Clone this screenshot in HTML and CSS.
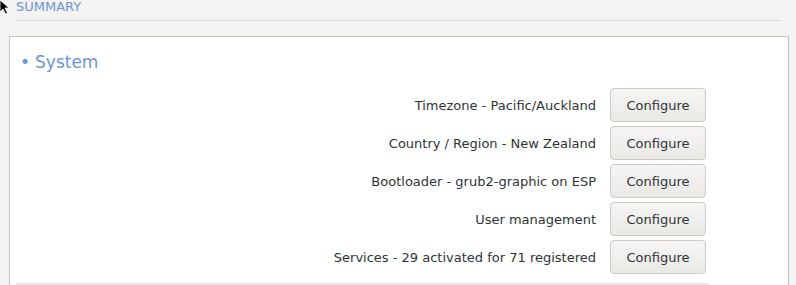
FILE: index.html
```html
<!DOCTYPE html>
<html lang="en">
<head>
  <meta charset="UTF-8">
  <meta name="viewport" content="width=device-width, initial-scale=1.0">
  <title>Summary</title>
  <link rel="stylesheet" href="styles.css">
</head>
<body>
  <svg class="cursor" width="12" height="16" viewBox="0 0 12 16">
    <path d="M0 0 L0 12 L3 9 L5.5 14 L7.5 13 L5 8 L9 8 Z" fill="#000" stroke="#fff" stroke-width="0.8"/>
  </svg>
  <div class="page">
    <div class="page-title">SUMMARY</div>
    <div class="summary-box">
      <h2 class="section-title"><span class="bullet">&bull;</span>System</h2>
      <div class="rows">
        <div class="row">
          <span class="row-label">Timezone - Pacific/Auckland</span>
          <button class="btn">Configure</button>
        </div>
        <div class="row">
          <span class="row-label">Country / Region - New Zealand</span>
          <button class="btn">Configure</button>
        </div>
        <div class="row">
          <span class="row-label">Bootloader - grub2-graphic on ESP</span>
          <button class="btn">Configure</button>
        </div>
        <div class="row">
          <span class="row-label">User management</span>
          <button class="btn">Configure</button>
        </div>
        <div class="row">
          <span class="row-label">Services - 29 activated for 71 registered</span>
          <button class="btn">Configure</button>
        </div>
      </div>
      <div class="next-section"></div>
    </div>
  </div>
</body>
</html>
```

FILE: styles.css
```css
body {
  font-family: "DejaVu Sans", Verdana, sans-serif;
  background-color: #f4f3f1;
  color: #2e3436;
  margin: 0;
  padding: 0;
  overflow: hidden;
}

.cursor {
  position: absolute;
  top: 0;
  left: 0;
}

.page {
  padding: 0 0 0 9px;
}

.page-title {
  margin-left: 7px;
  width: 766px;
  height: 20px;
  line-height: 14px;
  font-size: 13px;
  color: #6b95d9;
  border-bottom: 1px solid #dcdad6;
}

.summary-box {
  margin-top: 15px;
  width: 778px;
  height: 260px;
  background-color: #fff;
  border: 1px solid #c5c2bc;
  border-bottom: none;
}

.section-title {
  margin: 13px 0 0 10px;
  height: 24px;
  line-height: 24px;
  font-size: 17px;
  font-weight: normal;
  color: #6b95d9;
}

.bullet {
  margin-right: 5px;
}

.rows {
  margin-top: 14px;
  width: 696px;
  display: flex;
  flex-direction: column;
  gap: 4px;
}

.row {
  display: flex;
  justify-content: flex-end;
  align-items: center;
  gap: 14px;
}

.row-label {
  font-size: 13px;
}

.btn {
  width: 96px;
  height: 34px;
  padding: 0;
  font-family: inherit;
  font-size: 13px;
  color: #2e3436;
  background: linear-gradient(#f6f5f4, #ebe9e6);
  border: 1px solid #cdc9c3;
  border-radius: 4px;
}

.next-section {
  margin: 9px 0 0 6px;
  width: 693px;
  height: 10px;
  background-color: #e6e6e6;
}
```
